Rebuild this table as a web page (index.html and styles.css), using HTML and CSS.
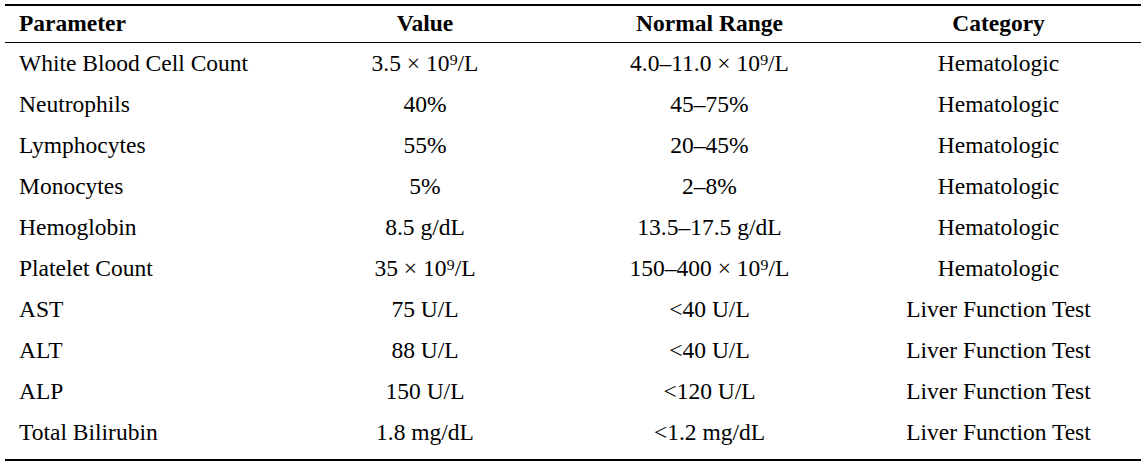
FILE: index.html
```html
<!DOCTYPE html>
<html lang="en">
<head>
<meta charset="utf-8">
<title>Lab Results</title>
<link rel="stylesheet" href="styles.css">
</head>
<body>
<table class="lab-table">
  <colgroup>
    <col class="col-param">
    <col class="col-value">
    <col class="col-range">
    <col class="col-cat">
  </colgroup>
  <thead>
    <tr>
      <th class="left">Parameter</th>
      <th>Value</th>
      <th>Normal Range</th>
      <th>Category</th>
    </tr>
  </thead>
  <tbody>
    <tr><td class="left">White Blood Cell Count</td><td>3.5 × 10⁹/L</td><td>4.0–11.0 × 10⁹/L</td><td>Hematologic</td></tr>
    <tr><td class="left">Neutrophils</td><td>40%</td><td>45–75%</td><td>Hematologic</td></tr>
    <tr><td class="left">Lymphocytes</td><td>55%</td><td>20–45%</td><td>Hematologic</td></tr>
    <tr><td class="left">Monocytes</td><td>5%</td><td>2–8%</td><td>Hematologic</td></tr>
    <tr><td class="left">Hemoglobin</td><td>8.5 g/dL</td><td>13.5–17.5 g/dL</td><td>Hematologic</td></tr>
    <tr><td class="left">Platelet Count</td><td>35 × 10⁹/L</td><td>150–400 × 10⁹/L</td><td>Hematologic</td></tr>
    <tr><td class="left">AST</td><td>75 U/L</td><td>&lt;40 U/L</td><td>Liver Function Test</td></tr>
    <tr><td class="left">ALT</td><td>88 U/L</td><td>&lt;40 U/L</td><td>Liver Function Test</td></tr>
    <tr><td class="left">ALP</td><td>150 U/L</td><td>&lt;120 U/L</td><td>Liver Function Test</td></tr>
    <tr class="last"><td class="left">Total Bilirubin</td><td>1.8 mg/dL</td><td>&lt;1.2 mg/dL</td><td>Liver Function Test</td></tr>
  </tbody>
</table>
</body>
</html>
```
FILE: styles.css
```css
html, body {
  margin: 0;
  padding: 0;
  background: #ffffff;
}

body {
  padding: 4px 0 0 5px;
  font-family: "Liberation Serif", "Times New Roman", serif;
  color: #000000;
}

.lab-table {
  width: 1136px;
  border-collapse: collapse;
  table-layout: fixed;
  font-size: 23.5px;
  line-height: 27px;
  border-top: 2px solid #000;
  border-bottom: 2px solid #000;
}

.col-param { width: 282px; }
.col-value { width: 276px; }
.col-range { width: 293px; }
.col-cat { width: 285px; }

.lab-table th,
.lab-table td {
  text-align: center;
  white-space: nowrap;
}

.lab-table th {
  font-weight: bold;
  padding: 4px 0 5px;
  border-bottom: 1.5px solid #000;
}

.lab-table td {
  padding: 7px 0 7px;
}

.lab-table .last td {
  padding-bottom: 13px;
}

.lab-table .left {
  text-align: left;
  padding-left: 14px;
}
```
